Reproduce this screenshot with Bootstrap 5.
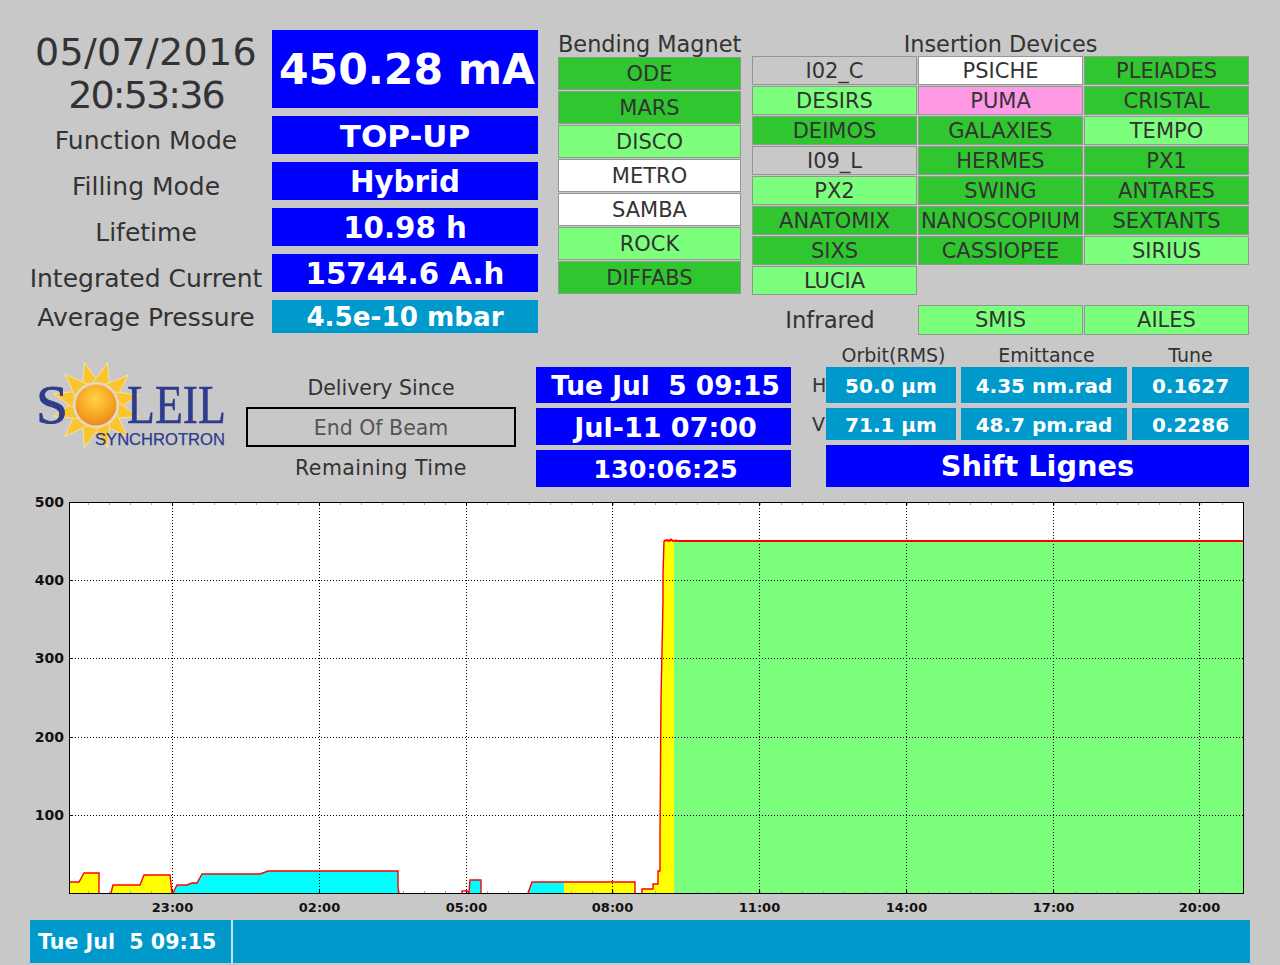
<!DOCTYPE html>
<html lang="en">
<head>
  <meta charset="UTF-8" />
  <meta name="viewport" content="width=device-width, initial-scale=1" />
  <title>Soleil Status</title>
  <link href="https://cdn.jsdelivr.net/npm/bootstrap@5.3.0/dist/css/bootstrap.min.css" rel="stylesheet" />
  <style>
    html, body { height: 965px; overflow: hidden; }
    body {
      background-color: #c8c8c8;
      color: #333;
      font-family: "DejaVu Sans", sans-serif;
      line-height: 1;
    }
    .status-top { padding: 30px 31px 0 30px; height: 345px; }
    .mode-grid {
      display: grid;
      grid-template-columns: 232px 266px;
      grid-template-rows: 78px 38px 38px 38px 38px 33px;
      column-gap: 10px;
      row-gap: 8px;
    }
    .clock { font-size: 38px; line-height: 43px; padding-top: 1px; letter-spacing: .3px; }
    .clock-time { letter-spacing: -1.9px; }
    .mode-label { font-size: 25px; padding-top: 11px; white-space: nowrap; }
    .mode-label-last { padding-top: 2px; }
    .val-blue { background-color: #00f; color: #fff; font-weight: 700; }
    .val-teal { background-color: #09c; color: #fff; font-weight: 700; }
    .val-big { font-size: 42.5px; padding: 2px 0 0 4px; }
    .val-mode { font-size: 29.3px; padding-top: 4px; }
    .val-topup { font-size: 31px; padding-top: 2px; }
    .val-press { font-size: 26.2px; padding-top: 2px; }
    .bend-col { width: 183px; margin-left: 20px; }
    .insert-col { width: 497px; margin-left: 11px; }
    .group-title { font-size: 22.4px; text-align: center; height: 27px; padding-top: 3px; white-space: nowrap; }
    .insert-col .group-title { height: 26px; }
    .bend-list { display: grid; grid-auto-rows: 33px; row-gap: 1px; }
    .insert-list {
      display: grid;
      grid-template-columns: 165px 165px 165px;
      grid-auto-rows: 29px;
      gap: 1px;
    }
    .dev {
      display: flex;
      align-items: center;
      justify-content: center;
      border: 1px solid #8f9a8f;
      padding-top: 2px;
      font-size: 21px;
      white-space: nowrap;
      overflow: hidden;
    }
    .dev-run { background-color: #2fc62f; }
    .dev-ok { background-color: #7cff7c; }
    .dev-off { background-color: #c8c8c8; }
    .dev-idle { background-color: #fff; }
    .dev-alert { background-color: #ff99e6; }
    .infra-row {
      display: grid;
      grid-template-columns: 165px 165px 165px;
      grid-auto-rows: 30px;
      gap: 1px;
      margin-top: 10px;
    }
    .infra-row .dev { padding-top: 0; }
    .infra-label { font-size: 22.7px; padding-right: 9px; }
    .status-mid { padding-left: 30px; height: 142px; }
    .logo-box { width: 216px; }
    .delivery {
      width: 270px;
      margin-top: 22px;
      display: grid;
      grid-template-rows: 40px 40px 40px;
      font-size: 20.5px;
    }
    .delivery > div { padding-top: 2px; }
    .end-beam { border: 2px solid #000; color: #555; }
    .remain-label { letter-spacing: .45px; }
    .date-col {
      width: 255px;
      margin: 22px 0 0 20px;
      display: grid;
      grid-template-rows: 36px 37px 37px;
      row-gap: 5px;
      white-space: pre;
    }
    .date-col > div { padding: 2px 0 0 4px; }
    .date-start { font-size: 26.4px; }
    .date-end { font-size: 27px; }
    .date-left { font-size: 25.5px; }
    .beam-grid {
      margin-left: 21px;
      width: 437px;
      display: grid;
      grid-template-columns: 14px 135px 171px 117px;
      grid-template-rows: 17px 36px 32px 42px;
      row-gap: 5px;
    }
    .beam-grid > .val-teal { font-size: 20px; margin-right: 5px; padding-top: 1px; }
    .beam-grid > .val-teal.tune-val { margin-right: 0; }
    .beam-head { font-size: 19px; padding-top: 3px; white-space: nowrap; }
    .beam-side { font-size: 19px; }
    .shift-box { grid-column: 2 / 5; font-size: 28.8px; }
    .chart-wrap { display: block; margin-top: 8px; }
    .chart-wrap text { font-family: "DejaVu Sans", sans-serif; font-weight: 700; fill: #111; }
    .foot-bar { margin: 5px 30px 0 30px; height: 43px; background-color: #09c; color: #fff; }
    .foot-date { width: 203px; border-right: 2px solid #c8e4f0; padding: 2px 0 0 8px; font-size: 20.6px; font-weight: 700; white-space: pre; }
  </style>
</head>
<body>
  <!-- Top block: modes and beamlines -->
  <div class="status-top d-flex">
    <div class="mode-grid">
      <div class="clock text-center">05/07/2016<br /><span class="clock-time">20:53:36</span></div>
      <div class="val-blue val-big d-flex align-items-center justify-content-center">450.28 mA</div>
      <div class="mode-label d-flex align-items-center justify-content-center">Function Mode</div>
      <div class="val-blue val-mode val-topup d-flex align-items-center justify-content-center">TOP-UP</div>
      <div class="mode-label d-flex align-items-center justify-content-center">Filling Mode</div>
      <div class="val-blue val-mode d-flex align-items-center justify-content-center">Hybrid</div>
      <div class="mode-label d-flex align-items-center justify-content-center">Lifetime</div>
      <div class="val-blue val-mode d-flex align-items-center justify-content-center">10.98 h</div>
      <div class="mode-label d-flex align-items-center justify-content-center">Integrated Current</div>
      <div class="val-blue val-mode d-flex align-items-center justify-content-center">15744.6 A.h</div>
      <div class="mode-label mode-label-last d-flex align-items-center justify-content-center">Average Pressure</div>
      <div class="val-teal val-press d-flex align-items-center justify-content-center">4.5e-10 mbar</div>
    </div>

    <div class="bend-col">
      <div class="group-title">Bending Magnet</div>
      <div class="bend-list">
        <div class="dev dev-run">ODE</div>
        <div class="dev dev-run">MARS</div>
        <div class="dev dev-ok">DISCO</div>
        <div class="dev dev-idle">METRO</div>
        <div class="dev dev-idle">SAMBA</div>
        <div class="dev dev-ok">ROCK</div>
        <div class="dev dev-run">DIFFABS</div>
      </div>
    </div>

    <div class="insert-col">
      <div class="group-title">Insertion Devices</div>
      <div class="insert-list">
        <div class="dev dev-off">I02_C</div>
        <div class="dev dev-idle">PSICHE</div>
        <div class="dev dev-run">PLEIADES</div>
        <div class="dev dev-ok">DESIRS</div>
        <div class="dev dev-alert">PUMA</div>
        <div class="dev dev-run">CRISTAL</div>
        <div class="dev dev-run">DEIMOS</div>
        <div class="dev dev-run">GALAXIES</div>
        <div class="dev dev-ok">TEMPO</div>
        <div class="dev dev-off">I09_L</div>
        <div class="dev dev-run">HERMES</div>
        <div class="dev dev-run">PX1</div>
        <div class="dev dev-ok">PX2</div>
        <div class="dev dev-run">SWING</div>
        <div class="dev dev-run">ANTARES</div>
        <div class="dev dev-run">ANATOMIX</div>
        <div class="dev dev-run">NANOSCOPIUM</div>
        <div class="dev dev-run">SEXTANTS</div>
        <div class="dev dev-run">SIXS</div>
        <div class="dev dev-run">CASSIOPEE</div>
        <div class="dev dev-ok">SIRIUS</div>
        <div class="dev dev-ok">LUCIA</div>
      </div>
      <div class="infra-row">
        <div class="infra-label d-flex align-items-center justify-content-center">Infrared</div>
        <div class="dev dev-ok">SMIS</div>
        <div class="dev dev-ok">AILES</div>
      </div>
    </div>
  </div>

  <!-- Middle block: logo, delivery, beam figures -->
  <div class="status-mid d-flex">
    <div class="logo-box">
      <svg width="216" height="142" viewBox="30 345 216 142">
        <defs>
          <radialGradient id="sunFill" cx="48%" cy="35%" r="70%">
            <stop offset="0" stop-color="#ffd24a" />
            <stop offset=".55" stop-color="#f9a825" />
            <stop offset="1" stop-color="#e8841a" />
          </radialGradient>
          <polygon id="sunRay" points="-9,-20 0,-44 9,-20" fill="#fbc531" stroke="#fff0b8" stroke-width=".6" />
        </defs>
        <g transform="translate(96 405)">
          <use href="#sunRay" transform="rotate(-15)" />
          <use href="#sunRay" transform="rotate(15)" />
          <use href="#sunRay" transform="rotate(47)" />
          <use href="#sunRay" transform="rotate(77)" />
          <use href="#sunRay" transform="rotate(105)" />
          <use href="#sunRay" transform="rotate(135)" />
          <use href="#sunRay" transform="rotate(165)" />
          <use href="#sunRay" transform="rotate(195)" />
          <use href="#sunRay" transform="rotate(225)" />
          <use href="#sunRay" transform="rotate(255)" />
          <use href="#sunRay" transform="rotate(285)" />
          <use href="#sunRay" transform="rotate(315)" />
          <circle r="23" fill="#dcdcd0" />
          <circle r="20.500" fill="url(#sunFill)" />
        </g>
        <text x="36" y="423" font-family="Liberation Serif, serif" font-size="54" fill="#2f3b8c" stroke="#2f3b8c" stroke-width=".8" textLength="32" lengthAdjust="spacingAndGlyphs">S</text>
        <text x="127" y="423" font-family="Liberation Serif, serif" font-size="54" fill="#2f3b8c" stroke="#2f3b8c" stroke-width=".5" textLength="99" lengthAdjust="spacingAndGlyphs">LEIL</text>
        <text x="95" y="445" font-family="Liberation Sans, sans-serif" font-size="16" fill="#2f3b8c" stroke="#2f3b8c" stroke-width=".25" textLength="130" lengthAdjust="spacingAndGlyphs">SYNCHROTRON</text>
      </svg>
    </div>

    <div class="delivery text-center">
      <div class="d-flex align-items-center justify-content-center">Delivery Since</div>
      <div class="end-beam d-flex align-items-center justify-content-center">End Of Beam</div>
      <div class="remain-label d-flex align-items-center justify-content-center">Remaining Time</div>
    </div>

    <div class="date-col">
      <div class="val-blue date-start d-flex align-items-center justify-content-center">Tue Jul  5 09:15</div>
      <div class="val-blue date-end d-flex align-items-center justify-content-center">Jul-11 07:00</div>
      <div class="val-blue date-left d-flex align-items-center justify-content-center">130:06:25</div>
    </div>

    <div class="beam-grid">
      <div></div>
      <div class="beam-head d-flex align-items-center justify-content-center">Orbit(RMS)</div>
      <div class="beam-head d-flex align-items-center justify-content-center">Emittance</div>
      <div class="beam-head d-flex align-items-center justify-content-center">Tune</div>
      <div class="beam-side d-flex align-items-center">H</div>
      <div class="val-teal d-flex align-items-center justify-content-center">50.0 µm</div>
      <div class="val-teal d-flex align-items-center justify-content-center">4.35 nm.rad</div>
      <div class="val-teal tune-val d-flex align-items-center justify-content-center">0.1627</div>
      <div class="beam-side d-flex align-items-center">V</div>
      <div class="val-teal d-flex align-items-center justify-content-center">71.1 µm</div>
      <div class="val-teal d-flex align-items-center justify-content-center">48.7 pm.rad</div>
      <div class="val-teal tune-val d-flex align-items-center justify-content-center">0.2286</div>
      <div></div>
      <div class="val-blue shift-box d-flex align-items-center justify-content-center">Shift Lignes</div>
    </div>
  </div>

  <!-- Current history -->
  <svg class="chart-wrap" width="1280" height="420" viewBox="0 495 1280 420">
    <rect x="69" y="502" width="1175" height="391" fill="#fff" />
    <!-- green / yellow / cyan zones under the current curve -->
    <polygon fill="#ff0" points="69,893 69,882 79,882 84,873 99,873 99,893" />
    <polygon fill="#ff0" points="111,893 113,885 140,885 144,875 170,875 172,893" />
    <polygon fill="#0ff" points="173,893 177,885 187,885 192,883 197,883 202,874 260,874 268,871 398,871 398,888 399,893" />
    <polygon fill="#0ff" points="469,893 470,880 481,880 481,893" />
    <polygon fill="#0ff" points="528,893 532,882 564,882 564,893" />
    <polygon fill="#ff0" points="564,882 635,882 635,893 564,893" />
    <polygon fill="#ff0" points="642,893 642,889 653,889 653,884 658,884 658,871 660,871 660,835 661,700 663,600 663,574 664,541 674,541 674,893" />
    <rect x="674" y="541" width="570" height="352" fill="#7cff7c" />
    <!-- grid -->
    <g stroke="#000" stroke-width="1" stroke-dasharray="1 2" shape-rendering="crispEdges">
      <path d="M172.500 502V893M319.500 502V893M466.500 502V893M612.500 502V893M759.500 502V893M906.500 502V893M1053.500 502V893M1199.500 502V893" />
      <path d="M69 580.500H1244M69 658.500H1244M69 737.500H1244M69 815.500H1244" />
    </g>
    <!-- minor ticks -->
    <g stroke="#aaa" stroke-width="2" stroke-dasharray="1 20" shape-rendering="crispEdges">
      <path d="M88 892H1244M88 504H1244" />
    </g>
    <!-- major ticks -->
    <path d="M172.500 502v4M319.500 502v4M466.500 502v4M612.500 502v4M759.500 502v4M906.500 502v4M1053.500 502v4M1199.500 502v4M172.500 893v-4M319.500 893v-4M466.500 893v-4M612.500 893v-4M759.500 893v-4M906.500 893v-4M1053.500 893v-4M1199.500 893v-4M69 580.500h4M69 658.500h4M69 737.500h4M69 815.500h4" stroke="#000" shape-rendering="crispEdges" />
    <!-- current -->
    <g fill="none" stroke="#f00" stroke-width="1.400">
      <polyline points="69,882 79,882 84,873 99,873 99,893" />
      <polyline points="111,893 113,885 140,885 144,875 170,875 172,893" />
      <polyline points="173,893 177,885 187,885 192,883 197,883 202,874 260,874 268,871 398,871 398,888 399,893" />
      <polyline points="462,893 462,891 467,891 469,893 470,880 481,880 481,893" />
      <polyline points="528,893 532,882 635,882 635,893" />
      <polyline points="642,893 642,889 653,889 653,884 658,884 658,871 660,871 660,835 661,700 663,600 663,574 664,541" />
      <polyline points="664,541 667,540 669,541 671,539.500 673,541 676,540.500 678,541 1244,541" stroke-width="2" />
    </g>
    <path d="M69.500 502V893.500H1243.500V502.500H69" fill="none" stroke="#000" stroke-width="1" shape-rendering="crispEdges" />
    <g font-size="14" text-anchor="end">
      <text x="64" y="507">500</text>
      <text x="64" y="585">400</text>
      <text x="64" y="663">300</text>
      <text x="64" y="742">200</text>
      <text x="64" y="820">100</text>
    </g>
    <g font-size="13" text-anchor="middle">
      <text x="172.500" y="912">23:00</text>
      <text x="319.500" y="912">02:00</text>
      <text x="466.500" y="912">05:00</text>
      <text x="612.500" y="912">08:00</text>
      <text x="759.500" y="912">11:00</text>
      <text x="906.500" y="912">14:00</text>
      <text x="1053.500" y="912">17:00</text>
      <text x="1199.500" y="912">20:00</text>
    </g>
  </svg>

  <div class="foot-bar d-flex">
    <div class="foot-date d-flex align-items-center">Tue Jul  5 09:15</div>
  </div>
</body>
</html>
